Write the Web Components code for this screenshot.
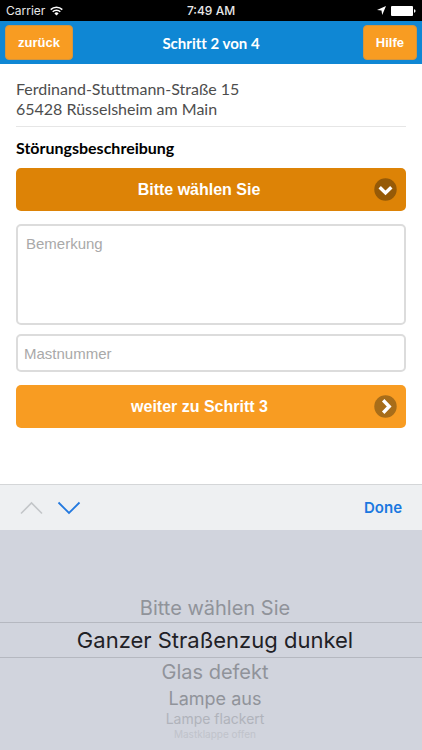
<!DOCTYPE html>
<html lang="de">
<head>
<meta charset="utf-8">
<meta name="viewport" content="width=device-width, initial-scale=1">
<title>Schritt 2 von 4</title>
<style>
    body {
        margin: 0;
        background: #fff;
        font-family: "Liberation Sans", Arial, sans-serif;
    }
</style>
</head>
<body>
<report-app></report-app>

<template id="TEMPLATE_STATUS">
    <style>
    :host {
        display: grid;
        grid-template-columns: 1fr auto 1fr;
        align-items: center;
        height: 21px;
        padding: 0 6px;
        background: #000;
        color: #e8e8e8;
        font: 12px/21px Inter, sans-serif;
    }
    .left, .right {
        display: flex;
        align-items: center;
        gap: 5px;
    }
    .right { justify-content: flex-end; }
    .time { font-weight: 500; }
    svg { display: block; }
    </style>
    <div class="left">
        <span>Carrier</span>
        <svg width="13" height="10" viewBox="0 0 13 10" fill="none" stroke="#fff" stroke-width="1.5">
            <path d="M.7 3.6a8.2 8.2 0 0 1 11.6 0M2.7 5.8a5.4 5.4 0 0 1 7.6 0"/>
            <path d="M6.5 9.5 4.4 7.4a3 3 0 0 1 4.2 0z" fill="#fff" stroke="none"/>
        </svg>
    </div>
    <span class="time">7:49 AM</span>
    <div class="right">
        <svg width="9" height="9" viewBox="0 0 9 9" fill="#fff"><path d="M9 0 5.2 9 4.5 4.5 0 3.9z"/></svg>
        <svg width="25" height="10" viewBox="0 0 25 10" fill="#fff"><rect width="22" height="10" rx="1"/><path d="M23 3.3c2 .3 2 3.1 0 3.4z"/></svg>
    </div>
</template>

<template id="TEMPLATE_HEADER">
    <style>
    :host {
        display: grid;
        grid-template-columns: 1fr auto 1fr;
        align-items: center;
        height: 43px;
        padding: 0 5px;
        background: #0f87d4;
    }
    h1 {
        margin: 0;
        color: #fff;
        font: 700 15px/20px Lato, sans-serif;
        font-variant-ligatures: none;
    }
    ::slotted(:last-child) { justify-self: end; }
    ::slotted(:first-child) { justify-self: start; }
    </style>
    <slot name="back"></slot>
    <h1><slot></slot></h1>
    <slot name="help"></slot>
</template>

<template id="TEMPLATE_NAV_BUTTON">
    <style>
    :host { display: block; }
    button {
        display: block;
        height: 35px;
        padding: 0 12px;
        border: 1px solid #d3953f;
        border-radius: 4px;
        background: #f89c22;
        color: #fff;
        font: bold 13px/20px "Liberation Sans", Arial, sans-serif;
    }
    </style>
    <button type="button"><slot></slot></button>
</template>

<template id="TEMPLATE_SELECT">
    <style>
    :host { display: grid; }
    select, svg { grid-area: 1 / 1; }
    select {
        width: 100%;
        height: 43px;
        padding: 0 32px 0 8px;
        appearance: none;
        border: 0;
        border-radius: 5px;
        background: #dd8306;
        color: #fff;
        font: bold 16px/20px "Liberation Sans", Arial, sans-serif;
        text-align: center;
        text-align-last: center;
    }
    svg {
        place-self: center end;
        margin-right: 9px;
        pointer-events: none;
    }
    </style>
    <select aria-label="Störungsbeschreibung">
        <option>Bitte wählen Sie</option>
        <option>Ganzer Straßenzug dunkel</option>
        <option>Glas defekt</option>
        <option>Lampe aus</option>
        <option>Lampe flackert</option>
        <option>Mastklappe offen</option>
    </select>
    <svg width="23" height="23" viewBox="0 0 23 23" fill="none">
        <circle cx="11.5" cy="11.5" r="11.2" fill="#965a07"/>
        <path d="m5.7 9.2 5.8 5.7 5.8-5.7" stroke="#fff" stroke-width="3.4"/>
    </svg>
</template>

<template id="TEMPLATE_SUBMIT">
    <style>
    :host { display: block; }
    button {
        display: flex;
        align-items: center;
        width: 100%;
        height: 43px;
        padding: 0 9px;
        border: 0;
        border-radius: 5px;
        background: #f89c22;
        color: #fff;
        font: bold 16px/20px "Liberation Sans", Arial, sans-serif;
    }
    span { flex: 1; }
    </style>
    <button type="button">
        <span><slot></slot></span>
        <svg width="23" height="23" viewBox="0 0 23 23" fill="none">
            <circle cx="11.5" cy="11.5" r="11.2" fill="#a86d19"/>
            <path d="m9.2 5.3 6 6.2-6 6.2" stroke="#fff" stroke-width="3.4"/>
        </svg>
    </button>
</template>

<template id="TEMPLATE_FIELD">
    <style>
    :host { display: block; }
    textarea, input {
        display: block;
        box-sizing: border-box;
        width: 100%;
        height: 38px;
        margin: 0;
        padding: 0 6px;
        border: 2px solid #dcdcdc;
        border-radius: 5px;
        background: #fff;
        color: #333;
        font: 15px/20px "Liberation Sans", Arial, sans-serif;
        resize: none;
    }
    textarea {
        height: 101px;
        padding: 8px;
    }
    ::placeholder { color: #a9a9a9; opacity: 1; }
    </style>
</template>

<template id="TEMPLATE_ACCESSORY">
    <style>
    :host {
        display: flex;
        align-items: center;
        box-sizing: border-box;
        height: 46px;
        padding: 0 20px;
        border-top: 1px solid #d4d6d8;
        background: #eef0f2;
    }
    button {
        display: block;
        padding: 0;
        border: 0;
        background: none;
        color: #1a78e0;
        font: 600 15px/20px Inter, sans-serif;
    }
    .arrows {
        display: flex;
        flex: 1;
        gap: 14px;
    }
    svg { display: block; }
    </style>
    <div class="arrows">
        <button type="button" aria-label="Zurück" disabled>
            <svg width="23" height="14" viewBox="0 0 23 14" fill="none" stroke="#c3c6c9" stroke-width="1.6"><path d="M1 12.5 11.5 2 22 12.5"/></svg>
        </button>
        <button type="button" aria-label="Weiter">
            <svg width="24" height="14" viewBox="0 0 24 14" fill="none" stroke="#2379df" stroke-width="1.8"><path d="M1.5 1.5 12 12 22.5 1.5"/></svg>
        </button>
    </div>
    <button type="button">Done</button>
</template>

<template id="TEMPLATE_WHEEL">
    <style>
    :host {
        display: block;
        box-sizing: border-box;
        height: 220px;
        padding-top: 64px;
        overflow: hidden;
        background: #d1d4dd;
    }
    ul {
        margin: 0;
        padding: 0;
        list-style: none;
    }
    button {
        display: block;
        width: 100%;
        padding: 0 0 0 8px;
        border: 0;
        background: none;
        color: #90939a;
        font: 20px/28px Inter, sans-serif;
    }
    /* rows get smaller and paler towards the rim of the wheel */
    .active {
        border: solid #b5b8c0;
        border-width: 1px 0;
        color: #1f2126;
        font-size: 22px;
        line-height: 34px;
    }
    .far { font-size: 18px; line-height: 25px; }
    .rim { font-size: 14px; line-height: 16px; color: #b0b3bb; }
    .edge { font-size: 10px; line-height: 14px; color: #c0c3cb; }
    </style>
    <ul></ul>
</template>

<template id="TEMPLATE_APP">
    <style>
    :host {
        display: flex;
        flex-direction: column;
        min-height: 100vh;
    }
    main {
        flex: 1;
        padding: 15px 16px 0;
    }
    address {
        padding-bottom: 7px;
        border-bottom: 1px solid #e6e6e6;
        color: #4d4d4d;
        font: 16px/20px Lato, sans-serif;
        font-variant-ligatures: none;
    }
    h2 {
        margin: 11px 0 10px;
        color: #000;
        font: 700 16px/20px Lato, sans-serif;
    }
    select-box { margin-bottom: 13px; }
    form-field { margin-bottom: 9px; }
    form-field:last-of-type { margin-bottom: 13px; }
    </style>
    <status-bar></status-bar>
    <step-header>
        <nav-button slot="back">zurück</nav-button>
        Schritt 2 von 4
        <nav-button slot="help">Hilfe</nav-button>
    </step-header>
    <main>
        <address>Ferdinand-Stuttmann-Straße 15<br>65428 Rüsselsheim am Main</address>
        <h2>Störungsbeschreibung</h2>
        <select-box></select-box>
        <form-field placeholder="Bemerkung" multiline></form-field>
        <form-field placeholder="Mastnummer"></form-field>
        <submit-button>weiter zu Schritt 3</submit-button>
    </main>
    <picker-accessory></picker-accessory>
    <picker-wheel></picker-wheel>
</template>

<script>
class BaseElement extends HTMLElement {
    constructor() {
        super()
        const shadow = this.attachShadow({ mode: "open" })
        const template = document.getElementById(this.constructor.template)
        shadow.append(template.content.cloneNode(true))
    }
}

const define = (name, id) => customElements.define(name, class extends BaseElement {
    static template = id
})

define('status-bar', 'TEMPLATE_STATUS')
define('step-header', 'TEMPLATE_HEADER')
define('nav-button', 'TEMPLATE_NAV_BUTTON')
define('select-box', 'TEMPLATE_SELECT')
define('submit-button', 'TEMPLATE_SUBMIT')
define('picker-accessory', 'TEMPLATE_ACCESSORY')

customElements.define('form-field', class extends BaseElement {
    static template = 'TEMPLATE_FIELD'

    connectedCallback() {
        const field = document.createElement(this.hasAttribute('multiline') ? 'textarea' : 'input')
        field.placeholder = this.getAttribute('placeholder')
        field.setAttribute('aria-label', field.placeholder)
        this.shadowRoot.append(field)
    }
})

customElements.define('picker-wheel', class extends BaseElement {
    static template = 'TEMPLATE_WHEEL'

    connectedCallback() {
        const rows = [
            ['Bitte wählen Sie', 'near'],
            ['Ganzer Straßenzug dunkel', 'active'],
            ['Glas defekt', 'near'],
            ['Lampe aus', 'far'],
            ['Lampe flackert', 'rim'],
            ['Mastklappe offen', 'edge']
        ]
        const list = this.shadowRoot.querySelector('ul')
        rows.forEach(([text, place]) => {
            const item = document.createElement('li')
            const button = document.createElement('button')
            button.type = 'button'
            button.className = place
            button.textContent = text
            item.append(button)
            list.append(item)
        })
    }
})

define('report-app', 'TEMPLATE_APP')
</script>
</body>
</html>
